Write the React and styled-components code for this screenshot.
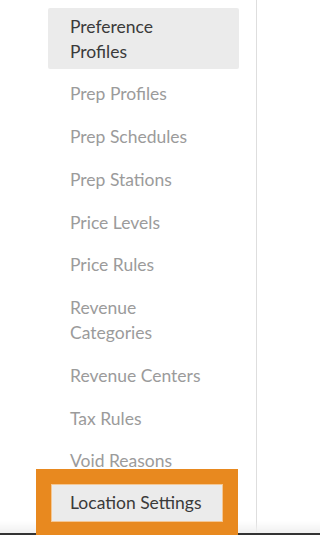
import React from 'react';
import styled, { createGlobalStyle } from 'styled-components';

const GlobalStyle = createGlobalStyle`
  html, body {
    margin: 0;
    padding: 0;
    background: #ffffff;
    font-family: Lato, "Open Sans", Arial, sans-serif;
  }
`;

const Sidebar = styled.nav`
  width: 257px;
  min-height: 100vh;
  box-sizing: border-box;
  border-right: 1px solid #dedede;
  padding-top: 8px;
`;

const NavList = styled.ul`
  list-style: none;
  margin: 0;
  padding: 0;
`;

const NavItem = styled.li`
  margin: 0 0 6.75px 48px;
  width: 191px;
  box-sizing: border-box;
  padding: 5.5px 34px 5.5px 22px;
  font-size: 17.5px;
  line-height: 25px;
  border-radius: 2px;
  color: ${(p) => (p.$active ? '#3a3a3a' : '#9b9b9b')};
  background: ${(p) => (p.$active ? '#ebebeb' : 'transparent')};
  cursor: pointer;
`;

const Highlight = styled.div`
  position: relative;
  z-index: 2;
  margin: -16.75px 0 0 36px;
  width: 202px;
  box-sizing: border-box;
  padding: 15px 15px 20px;
  background: #e8891f;
`;

const SettingsButton = styled.button`
  display: block;
  width: 100%;
  height: 38px;
  box-sizing: border-box;
  padding: 0 0 0 18px;
  text-align: left;
  font-family: inherit;
  font-size: 17.5px;
  color: #3a3a3a;
  background: #ebebeb;
  border: 1px solid #f4c794;
  cursor: pointer;
`;

const BottomEdge = styled.div`
  position: fixed;
  left: 0;
  right: 0;
  bottom: 0;
  z-index: 1;
  height: 12px;
  background: linear-gradient(to bottom, rgba(240, 240, 240, 0), #f0f0f0);
  border-bottom: 2px solid #333333;
`;

const items = [
  { label: 'Preference Profiles', active: true },
  { label: 'Prep Profiles' },
  { label: 'Prep Schedules' },
  { label: 'Prep Stations' },
  { label: 'Price Levels' },
  { label: 'Price Rules' },
  { label: 'Revenue Categories' },
  { label: 'Revenue Centers' },
  { label: 'Tax Rules' },
  { label: 'Void Reasons' },
];

const App = () => {
  return (
    <>
      <GlobalStyle />
      <Sidebar>
        <NavList>
          {items.map((item) => (
            <NavItem key={item.label} $active={item.active}>
              {item.label}
            </NavItem>
          ))}
        </NavList>
        <Highlight>
          <SettingsButton>Location Settings</SettingsButton>
        </Highlight>
      </Sidebar>
      <BottomEdge />
    </>
  );
};

export default App;
